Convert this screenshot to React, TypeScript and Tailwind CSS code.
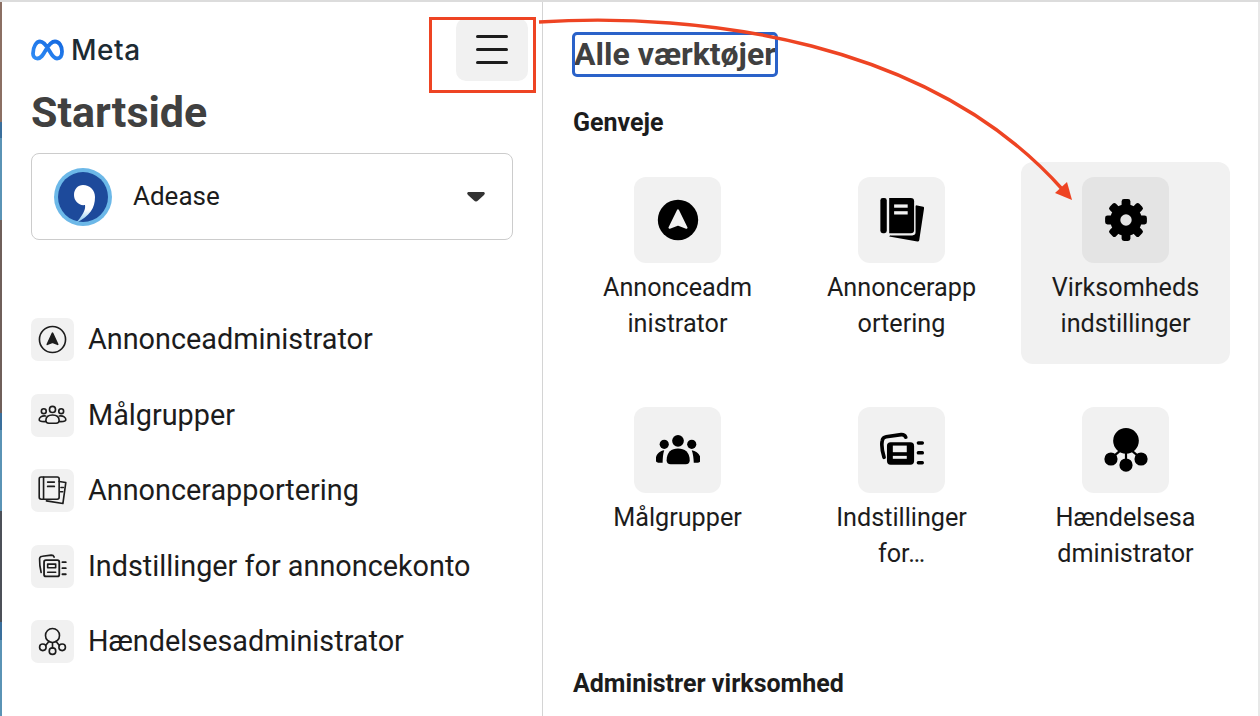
import React from "react";

const OutlineIcon = ({ children }: { children: React.ReactNode }) => (
  <div className="flex h-[43px] w-[43px] shrink-0 items-center justify-center rounded-[7px] bg-[#f1f1f1]">
    <svg viewBox="0 0 24 24" className="h-[29px] w-[29px]" fill="none" stroke="#1c1c1c" strokeWidth="1.35" strokeLinecap="round" strokeLinejoin="round">
      {children}
    </svg>
  </div>
);

const FilledSvg = ({ children }: { children: React.ReactNode }) => (
  <svg viewBox="0 0 24 24" className="h-[44px] w-[44px]" fill="#000">
    {children}
  </svg>
);

const ArrowOutline = () => (
  <>
    <circle cx="12" cy="12" r="10.8" />
    <path d="M12 6.8 L16.3 16 L12 14.2 L7.7 16 Z" fill="#1c1c1c" />
  </>
);
const AudienceOutline = () => (
  <>
    <circle cx="12" cy="7" r="2.5" />
    <circle cx="4.8" cy="8.4" r="2" />
    <circle cx="19.2" cy="8.4" r="2" />
    <path d="M6.5 16.2 C6.5 13 9 11.6 12 11.6 C15 11.6 17.5 13 17.5 16.2 C17.5 17.5 16.5 18.4 15 18.4 H9 C7.5 18.4 6.5 17.5 6.5 16.2 Z" />
    <path d="M6.3 12.4 C3 12 0.8 13.6 1 15.6 C1.1 16.8 2.4 17.2 6.4 17" />
    <path d="M17.7 12.4 C21 12 23.2 13.6 23 15.6 C22.9 16.8 21.6 17.2 17.6 17" />
  </>
);
const ReportOutline = () => (
  <>
    <path d="M17.5 4.5 L23 5.4 L20.6 22.8 L7 20.6" />
    <rect x="1" y="0.8" width="16.5" height="18.4" rx="1.6" />
    <path d="M4.6 1 V19" />
    <path d="M8 5 H13.5 M8 8.6 H13.5" strokeWidth="1.4" />
    <path d="M19 9.5 H21 M18.6 13 H20.4" />
  </>
);
const SettingsOutline = () => (
  <>
    <path d="M2.6 17 C1.6 13 1.2 9 1.3 5.6 C1.4 4.2 2.3 3.6 3.6 3.5 L11 2.6 C12.4 2.6 13 3.2 13.4 4.2" />
    <rect x="5" y="6.8" width="12.6" height="13.4" rx="1.6" strokeWidth="1.5" />
    <path d="M8 10 H14.6 V13 H8 Z M8 16.8 H14.6" />
    <path d="M20.2 8.4 H23 M20.2 13.4 H23 M20.2 18.4 H23" strokeWidth="1.5" />
  </>
);
const NetworkOutline = () => (
  <>
    <circle cx="12" cy="7" r="5.8" />
    <circle cx="4" cy="16.8" r="2.7" />
    <circle cx="12" cy="20" r="2.7" />
    <circle cx="20" cy="16.8" r="2.7" />
    <path d="M12 13 V17.3 M6.3 15.3 L9 12 M17.7 15.3 L15 12" />
  </>
);

const ArrowFilled = () => (
  <FilledSvg>
    <circle cx="12" cy="12" r="11" />
    <path d="M12 6.8 L16.6 16.2 L12 14.4 L7.4 16.2 Z" fill="#f1f1f1" stroke="#f1f1f1" strokeWidth="1.2" strokeLinejoin="round" />
  </FilledSvg>
);
const ReportFilled = () => (
  <FilledSvg>
    <path d="M19.6 4 L23.6 4.8 Q24.2 5 24 5.8 L21.4 23 Q21.2 23.8 20.4 23.7 L5 21 Z" />
    <rect x="4.2" y="-0.6" width="15.2" height="21" rx="1.8" fill="#f1f1f1" />
    <rect x="0.2" y="0" width="3.5" height="19.2" rx="1.3" />
    <path d="M5 0 H16.8 Q18.6 0 18.6 1.8 V17.4 Q18.6 19.2 16.8 19.2 H5 Z" />
    <rect x="7.7" y="3.5" width="7.4" height="1.8" fill="#f1f1f1" />
    <rect x="7.7" y="7.2" width="7.4" height="1.8" fill="#f1f1f1" />
  </FilledSvg>
);
const PeopleFilled = () => (
  <FilledSvg>
    <circle cx="12" cy="7" r="3.2" />
    <circle cx="4.5" cy="8.9" r="2.5" />
    <circle cx="19.5" cy="8.9" r="2.5" />
    <path d="M5.8 17.6 C5.8 13.2 8.4 11.2 12 11.2 C15.6 11.2 18.4 13.2 18.4 17.6 C18.4 19 17.6 19.8 16.2 19.8 H8 C6.6 19.8 5.8 19 5.8 17.6 Z" />
    <path d="M4.5 12.2 C1.8 12.6 -0.2 14.8 -0.2 17.2 C-0.2 18.4 0.6 18.9 1.6 18.9 H3.6 C3.7 16.4 3.8 14.2 4.5 12.2 Z" />
    <path d="M19.5 12.2 C22.2 12.6 24.4 14.8 24.4 17.2 C24.4 18.4 23.6 18.9 22.6 18.9 H20.6 C20.5 16.4 20.2 14.2 19.5 12.2 Z" />
  </FilledSvg>
);
const SettingsFilled = () => (
  <FilledSvg>
    <path d="M2.2 16 C1 12 0.8 9 1.2 7 C1.4 5.6 2.2 5 3.4 4.8 L11.5 3.6 C12.8 3.5 13.6 4 14 5" fill="none" stroke="#000" strokeWidth="2" strokeLinecap="round" />
    <rect x="3.8" y="7.8" width="14.8" height="12.2" rx="2" />
    <rect x="7" y="9.6" width="7.6" height="3.6" fill="#f1f1f1" />
    <rect x="7" y="15.2" width="7.6" height="1.6" fill="#f1f1f1" />
    <rect x="20" y="7.2" width="4" height="1.9" rx="0.9" />
    <rect x="20" y="12.6" width="4" height="1.9" rx="0.9" />
    <rect x="20" y="18" width="4" height="1.9" rx="0.9" />
  </FilledSvg>
);
const NetworkFilled = () => (
  <FilledSvg>
    <circle cx="12" cy="7" r="7" />
    <circle cx="3.8" cy="16.9" r="3.6" />
    <circle cx="12" cy="20.2" r="3.6" />
    <circle cx="20.2" cy="16.9" r="3.6" />
    <path d="M12 12 V18 M5 15.6 L8.4 12.8 M19 15.6 L15.6 12.8" stroke="#000" strokeWidth="1.2" />
  </FilledSvg>
);
const GearFilled = () => (
  <FilledSvg>
    {[0, 45, 90, 135, 180, 225, 270, 315].map((a) => (
      <rect key={a} x="9.6" y="0.6" width="4.8" height="6" rx="1.3" transform={`rotate(${a} 12 12)`} />
    ))}
    <circle cx="12" cy="12" r="8.6" />
    <circle cx="12" cy="12" r="3.1" fill="#e4e4e4" />
  </FilledSvg>
);

const navItems: { label: string; icon: React.ReactNode }[] = [
  { label: "Annonceadministrator", icon: <ArrowOutline /> },
  { label: "Målgrupper", icon: <AudienceOutline /> },
  { label: "Annoncerapportering", icon: <ReportOutline /> },
  { label: "Indstillinger for annoncekonto", icon: <SettingsOutline /> },
  { label: "Hændelsesadministrator", icon: <NetworkOutline /> },
];

const Tile = ({
  lines,
  icon,
  active,
}: {
  lines: string[];
  icon: React.ReactNode;
  active?: boolean;
}) => (
  <div className={`flex h-[202px] flex-col items-center rounded-[12px] pt-[15px] ${active ? "bg-[#f1f1f1]" : ""}`}>
    <div className={`flex h-[86px] w-[87px] items-center justify-center rounded-[12px] ${active ? "bg-[#e4e4e4]" : "bg-[#f1f1f1]"}`}>
      {icon}
    </div>
    <div className="mt-[7px] text-center text-[25.2px] leading-[36px] text-[#1c1c1c]">
      {lines.map((l) => (
        <div key={l}>{l}</div>
      ))}
    </div>
  </div>
);

const stripColors = [
  "h-[120px] bg-[#8b6f63]",
  "h-[16px] bg-[#3a6f9c]",
  "h-[82px] bg-[#5a93b5]",
  "h-[193px] bg-[#6f5f5a]",
  "h-[17px] bg-[#3a6f9c]",
  "h-[81px] bg-[#5a93b5]",
  "h-[111px] bg-[#4c5058]",
  "h-[18px] bg-[#3a6f9c]",
  "h-[76px] bg-[#5a93b5]",
];

export default function App() {
  return (
    <div className="relative flex h-[716px] w-[1260px] flex-col overflow-hidden bg-white font-['Roboto',sans-serif] text-[#1c1c1c]">
      <div className="h-[2px] shrink-0 bg-[#dcdcdc]" />
      <div className="flex min-h-0 flex-1">
        <div className="flex w-[2px] shrink-0 flex-col">
          {stripColors.map((c) => (
            <div key={c} className={c} />
          ))}
        </div>

        <aside className="flex w-[541px] shrink-0 flex-col border-r border-[#d4d4d4] px-[29px]">
          <div className="-mr-[15px] flex h-[78px] items-start justify-between">
            <div className="mt-[36px] flex items-center gap-[7px]">
              <svg viewBox="0 0 33 21" className="h-[22px] w-[33px]" fill="none">
                <defs>
                  <linearGradient id="metaGrad" x1="0" y1="1" x2="1" y2="0">
                    <stop offset="0" stopColor="#2f8cf5" />
                    <stop offset="1" stopColor="#1469e0" />
                  </linearGradient>
                </defs>
                <path
                  d="M2 14 C2 7 5.5 2 9 2 C13 2 16 7 18.5 11.5 C21 16 23 19 26 19 C29.5 19 31 16.5 31 12 C31 6.5 28 2 24 2 C20 2 17 6.5 14.5 11 C12 15.5 10 19 6.5 19 C3.5 19 2 17 2 14 Z"
                  stroke="url(#metaGrad)"
                  strokeWidth="3.8"
                />
              </svg>
              <span className="font-['Inter',sans-serif] text-[28px] font-medium leading-[24px] tracking-[0.5px] text-[#1c2b33]">Meta</span>
            </div>
            <button className="mt-[16px] flex h-[63px] w-[72px] flex-col items-center justify-center gap-[10px] rounded-[10px] bg-[#f1f1f1] pb-[1px]">
              <span className="h-[3px] w-[32px] rounded-full bg-[#1c1c1c]" />
              <span className="h-[3px] w-[32px] rounded-full bg-[#1c1c1c]" />
              <span className="h-[3px] w-[32px] rounded-full bg-[#1c1c1c]" />
            </button>
          </div>

          <h1 className="text-[43px] font-bold leading-[64px] text-[#404040]">Startside</h1>

          <div className="mt-[9px] flex h-[87px] items-center rounded-[8px] border border-[#cccccc] pl-[22px] pr-[27px]">
            <svg viewBox="0 0 58 58" className="h-[58px] w-[58px] shrink-0">
              <defs>
                <linearGradient id="commaGrad" x1="0" y1="0" x2="0" y2="1">
                  <stop offset="0" stopColor="#ffffff" />
                  <stop offset="0.65" stopColor="#ffffff" />
                  <stop offset="1" stopColor="#7cc3ec" />
                </linearGradient>
              </defs>
              <circle cx="29" cy="29" r="29" fill="#6cb8e8" />
              <circle cx="29" cy="29" r="25" fill="#1d4a9b" />
              <path
                d="M29 17 C36 17 41 22 41 29 C41 40 36 48 22 55 C28 48 32 42 31 37 C25 38 20 33 20 27 C20 21 24 17 29 17 Z"
                fill="url(#commaGrad)"
              />
            </svg>
            <span className="ml-[21px] flex-1 text-[26px]">Adease</span>
            <svg viewBox="0 0 18 10" className="h-[10px] w-[18px]">
              <path d="M2 0 H16 C18 0 18.4 1.6 17 3 L11 8.6 C9.8 9.8 8.2 9.8 7 8.6 L1 3 C-0.4 1.6 0 0 2 0 Z" fill="#333333" />
            </svg>
          </div>

          <nav className="mt-[78px] flex flex-col gap-[32.6px]">
            {navItems.map((n) => (
              <div key={n.label} className="flex h-[43px] items-center gap-[14px]">
                <OutlineIcon>{n.icon}</OutlineIcon>
                <span className="text-[28.8px] leading-[43px]">{n.label}</span>
              </div>
            ))}
          </nav>
        </aside>

        <main className="flex min-w-0 flex-1 flex-col pl-[30px] pr-[30px]">
          <h2 className="mt-[30px] pl-[1px] text-[32px] font-bold leading-[45px] text-[#404040]">Alle værktøjer</h2>
          <h3 className="mt-[31px] text-[25px] font-bold leading-[30px]">Genveje</h3>
          <div className="mt-[24px] grid w-[657px] grid-cols-[209px_209px_209px] gap-x-[15px] gap-y-[28px]">
            <Tile lines={["Annonceadm", "inistrator"]} icon={<ArrowFilled />} />
            <Tile lines={["Annoncerapp", "ortering"]} icon={<ReportFilled />} />
            <Tile active lines={["Virksomheds", "indstillinger"]} icon={<GearFilled />} />
            <Tile lines={["Målgrupper"]} icon={<PeopleFilled />} />
            <Tile lines={["Indstillinger", "for…"]} icon={<SettingsFilled />} />
            <Tile lines={["Hændelsesa", "dministrator"]} icon={<NetworkFilled />} />
          </div>
          <h3 className="mt-[75px] text-[25px] font-bold leading-[30px]">Administrer virksomhed</h3>
        </main>
        <div className="w-[2px] shrink-0 bg-[#e8e8e8]" />
      </div>

      {/* annotation overlays */}
      <div className="pointer-events-none absolute left-[429px] top-[17px] h-[76px] w-[107px] border-[3px] border-[#ee4423]" />
      <div className="pointer-events-none absolute left-[572px] top-[32px] h-[45px] w-[206px] rounded-[5px] border-[3px] border-[#2a62c9]" />
      <svg className="pointer-events-none absolute left-0 top-0" width="1260" height="716" fill="none">
        <path d="M539 22 C700 12 930 40 1063 190" stroke="#ee4423" strokeWidth="3.4" />
        <path d="M1072 200 L1055 193 L1067 182 Z" fill="#ee4423" />
      </svg>
    </div>
  );
}
